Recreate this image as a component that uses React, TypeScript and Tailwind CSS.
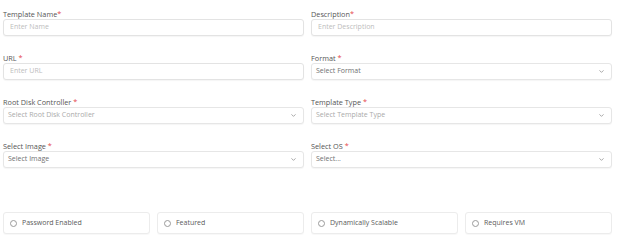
import { ChevronDown } from 'lucide-react'

type Field = {
  label: string
  placeholder: string
  kind: 'input' | 'select'
  spaced?: boolean
  muted?: boolean
}

const fields: Field[] = [
  { label: 'Template Name', placeholder: 'Enter Name', kind: 'input' },
  { label: 'Description', placeholder: 'Enter Description', kind: 'input' },
  { label: 'URL', placeholder: 'Enter URL', kind: 'input', spaced: true },
  { label: 'Format', placeholder: 'Select Format', kind: 'select', spaced: true },
  { label: 'Root Disk Controller', placeholder: 'Select Root Disk Controller', kind: 'select', spaced: true, muted: true },
  { label: 'Template Type', placeholder: 'Select Template Type', kind: 'select', spaced: true, muted: true },
  { label: 'Select Image', placeholder: 'Select Image', kind: 'select', spaced: true },
  { label: 'Select OS', placeholder: 'Select...', kind: 'select', spaced: true },
]

const toggles = ['Password Enabled', 'Featured', 'Dynamically Scalable', 'Requires VM']

function FormField({ field }: { field: Field }) {
  return (
    <div>
      <label className="block text-[7.3px] leading-[10px] text-[#555]">
        {field.label}
        {field.spaced ? ' ' : ''}
        <span className="text-[#e5484d]">*</span>
      </label>
      {field.kind === 'input' ? (
        <div className="flex h-[17px] items-center rounded-[3px] border border-[#e3e3e3] bg-white px-[6px] text-[7px] text-[#bdbdbd] shadow-[0_1px_1px_rgba(0,0,0,0.04)]">
          {field.placeholder}
        </div>
      ) : (
        <div className="flex h-[17px] items-center justify-between rounded-[3px] border border-[#e6e6e6] bg-white pl-[4px] pr-[6px] text-[7px] shadow-[0_1px_1px_rgba(0,0,0,0.04)]">
          <span className={field.muted ? 'text-[#aaa]' : 'text-[#707070]'}>{field.placeholder}</span>
          <ChevronDown className="h-[7px] w-[7px] text-[#888]" strokeWidth={2.5} />
        </div>
      )}
    </div>
  )
}

export default function App() {
  return (
    <div
      className="h-[245px] w-[639px] bg-white pl-[3px] pt-[9px]"
      style={{ fontFamily: '"Open Sans", "DejaVu Sans", sans-serif' }}
    >
      <div className="grid w-[609px] grid-cols-2 gap-x-[7px] gap-y-[17px]">
        {fields.map((f) => (
          <FormField key={f.label} field={f} />
        ))}
      </div>

      <div className="mt-[44px] grid w-[609px] grid-cols-4 gap-x-[7px]">
        {toggles.map((t) => (
          <div
            key={t}
            className="flex h-[22px] items-center gap-[5px] rounded-[3px] border border-[#ececec] bg-white px-[6px] text-[7px] text-[#5a5a5a] shadow-[0_1px_1px_rgba(0,0,0,0.03)]"
          >
            <span className="h-[7px] w-[7px] rounded-full border border-[#9a9a9a]" />
            {t}
          </div>
        ))}
      </div>
    </div>
  )
}
